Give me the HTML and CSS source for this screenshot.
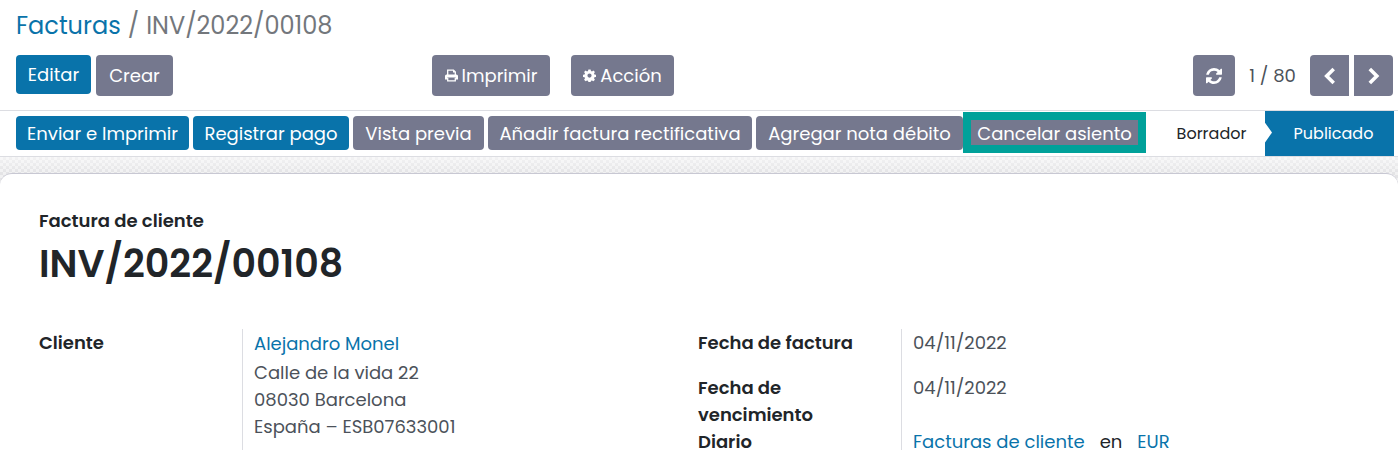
FILE: index.html
```html
<!DOCTYPE html>
<html lang="es">
<head>
<meta charset="utf-8">
<meta name="viewport" content="width=device-width, initial-scale=1">
<title>INV/2022/00108</title>
<link rel="stylesheet" href="styles.css">
</head>
<body>
<header class="control-panel">
  <nav class="breadcrumb" aria-label="Ruta"><a href="#">Facturas</a><span class="sep">/</span><span class="current">INV/2022/00108</span></nav>
  <div class="toolbar">
    <div class="group start">
      <button class="btn primary edit" type="button">Editar</button>
      <button class="btn tall create" type="button">Crear</button>
    </div>
    <div class="group actions">
      <button class="btn tall print" type="button"><svg class="icon" viewBox="0 0 13 13" aria-hidden="true"><path fill="none" stroke="currentColor" stroke-width="1.3" d="M2.7 6V1.1h5.8l1.8 1.8V6M2.7 9v2.9h7.6V9"/><path fill="currentColor" d="M1.6 5.5h9.8Q13 5.5 13 7v3.400h-2.400V8.600H2.400v1.800H0V7q0-1.500 1.600-1.500z"/><path fill="currentColor" d="M8 1v2.600h2.600V3z"/></svg>Imprimir</button>
      <button class="btn tall action" type="button"><svg class="icon" viewBox="0 0 13 13" aria-hidden="true"><path fill="currentColor" fill-rule="evenodd" d="M5.400.4h2.200l.4 1.700 1 .4 1.400-.9 1.500 1.500-.9 1.400.4 1 1.600.3v2.100l-1.600.4-.4 1 .9 1.500-1.500 1.500L9 11.400l-1 .4-.4 1.200H5.400L5 11.800l-1-.4-1.400.9-1.500-1.500.9-1.500-.4-1L0 7.900V5.800l1.600-.3.4-1-.9-1.400 1.500-1.500 1.400.9 1-.4zM6.500 4.500a2.100 2.100 0 1 0 0 4.200 2.100 2.100 0 0 0 0-4.200z"/></svg>Acción</button>
    </div>
    <div class="group pager">
      <button class="btn tall refresh" type="button" aria-label="Actualizar"><svg class="icon-lg" viewBox="0 0 1536 1536" aria-hidden="true"><path fill="currentColor" d="M1511 928q0 5-1 7-64 268-268 434.500T764 1536q-146 0-282.500-55T238 1324l-129 129q-19 19-45 19t-45-19-19-45V960q0-26 19-45t45-19h448q26 0 45 19t19 45-19 45l-137 137q71 66 161 102t187 36q134 0 250-65t186-179q11-17 53-117 8-23 30-23h192q13 0 22.500 9.500t9.500 22.500zm25-800v448q0 26-19 45t-45 19h-448q-26 0-45-19t-19-45 19-45l138-138Q969 256 768 256q-134 0-250 65T332 500q-11 17-53 117-8 23-30 23H50q-13 0-22.500-9.500T18 608v-7q65-268 270-434.500T768 0q146 0 284 55.500T1297 212l130-129q19-19 45-19t45 19 19 45z"/></svg></button>
      <span class="count">1 / 80</span>
      <button class="btn tall step prev" type="button" aria-label="Anterior"><svg class="chevron" viewBox="0 0 18 18" aria-hidden="true"><path fill="none" stroke="currentColor" stroke-width="3.6" d="M12.700 2 5.700 9l7 7"/></svg></button>
      <button class="btn tall step next" type="button" aria-label="Siguiente"><svg class="chevron" viewBox="0 0 18 18" aria-hidden="true"><path fill="none" stroke="currentColor" stroke-width="3.6" d="m4.800 2 7 7-7 7"/></svg></button>
    </div>
  </div>
</header>
<main>
  <div class="statusbar">
    <div class="status-actions">
      <button class="btn primary send" type="button">Enviar e Imprimir</button>
      <button class="btn primary pay" type="button">Registrar pago</button>
      <button class="btn preview" type="button">Vista previa</button>
      <button class="btn credit" type="button">Añadir factura rectificativa</button>
      <button class="btn debit" type="button">Agregar nota débito</button>
      <button class="btn cancel" type="button">Cancelar asiento</button>
    </div>
    <div class="stages">
      <button class="stage" type="button">Borrador</button>
      <button class="stage current-stage" type="button" aria-current="step">Publicado</button>
    </div>
  </div>
  <div class="backdrop">
    <section class="sheet">
      <p class="kind">Factura de cliente</p>
      <h1 class="number">INV/2022/00108</h1>
      <div class="columns">
        <dl class="fields">
          <dt>Cliente</dt>
          <dd><a class="partner" href="#">Alejandro Monel</a><br>Calle de la vida 22<br>08030 Barcelona<br>España – ESB07633001</dd>
        </dl>
        <dl class="fields">
          <dt>Fecha de factura</dt><dd class="spaced">04/11/2022</dd>
          <dt>Fecha de vencimiento</dt><dd>04/11/2022</dd>
          <dt>Diario</dt><dd class="journal"><a href="#">Facturas de cliente</a><span>en</span><a href="#">EUR</a></dd>
        </dl>
      </div>
    </section>
  </div>
</main>
</body>
</html>
```
FILE: styles.css
```css
:root {
  --blue: #0973aa;
  --slate: #75788e;
  --line: #dcdde2;
  --ink: #212529;
  --text: #4c525a;
}
* { box-sizing: border-box; }
html { scrollbar-width: none; }
body {
  margin: 0;
  background: #fff;
  color: var(--ink);
  font: 18px/27px Poppins, Inter, "Open Sans", sans-serif;
}
a { color: var(--blue); text-decoration: none; }
.control-panel {
  padding: 8px 5px 14px 16px;
  border-bottom: 1px solid var(--line);
}
.breadcrumb {
  display: flex;
  gap: 7px;
  font-size: 24px;
  line-height: 36px;
  color: #73777c;
}
.toolbar {
  display: grid;
  grid-template-columns: 416px 1fr auto;
  margin-top: 11px;
}
.group { display: flex; align-items: flex-start; gap: 5px; }
.actions { gap: 21px; }
.btn {
  display: inline-flex;
  align-items: center;
  justify-content: center;
  gap: 4px;
  height: 34px;
  padding: 0;
  border: 0;
  border-radius: 4px;
  background: var(--slate);
  color: #fff;
  font: inherit;
  white-space: nowrap;
}
.primary { background: var(--blue); }
.edit { width: 75px; height: 39px; }
.tall { height: 41px; }
.create { width: 77px; }
.print { width: 118px; }
.action { width: 103px; }
.icon { width: 13px; height: 13px; }
.icon-lg { width: 16px; height: 16px; }
.chevron { width: 18px; height: 18px; }
.pager { align-items: center; }
.refresh { width: 42px; }
.count { width: 65px; text-align: center; color: var(--text); }
.step { width: 39px; }
.prev { border-radius: 4px 0 0 4px; }
.next { border-radius: 0 4px 4px 0; }
.statusbar {
  display: flex;
  justify-content: space-between;
  padding: 0 4px 0 16px;
  border-bottom: 1px solid var(--line);
}
.status-actions {
  display: flex;
  align-items: center;
  gap: 4px;
  height: 45px;
  padding-bottom: 2px;
}
.status-actions .btn { padding-top: 2px; }
.send { width: 173px; }
.pay { width: 156px; }
.preview { width: 131px; }
.credit { width: 264px; }
.debit { width: 207px; }
.cancel {
  width: 183px;
  height: 41px;
  margin-left: -4px;
  border: 8px solid #00a19a;
  border-radius: 0;
}
.stages { display: flex; }
.stage {
  width: 107px;
  padding: 0;
  border: 0;
  background: #fff;
  color: var(--ink);
  font: inherit;
  font-size: 16px;
}
.current-stage {
  width: 129px;
  padding-left: 8px;
  background: var(--blue);
  color: #fff;
  clip-path: polygon(0 0, 100% 0, 100% 100%, 0 100%, 0 70%, 7px 48%, 0 26%);
}
.backdrop {
  padding-top: 16px;
  background:
    linear-gradient(#fff8, #fff0 16px),
    repeating-conic-gradient(#e4e4e6 0 25%, #f1f1f2 0 50%) 0 0 / 6px 6px;
}
.sheet {
  padding: 33px 41px 0 39px;
  border-top: 1px solid #c8c8d3;
  border-radius: 12px 12px 0 0;
  background: #fff;
}
.kind { margin: 0; font-weight: 600; }
.number {
  margin: 6px 0 41px;
  font-size: 38px;
  line-height: 48px;
  font-weight: 600;
}
.columns { display: grid; grid-template-columns: 1fr 1fr; }
.fields {
  display: grid;
  grid-template-columns: 203px 1fr;
  margin: 0;
}
dt { padding-right: 45px; font-weight: 600; }
dd {
  margin: 0;
  padding-left: 11px;
  border-left: 1px solid var(--line);
  color: var(--text);
}
.partner { line-height: 30px; }
.spaced { padding-bottom: 18px; }
.journal { display: flex; gap: 15px; }
.journal span { color: var(--ink); }
```
